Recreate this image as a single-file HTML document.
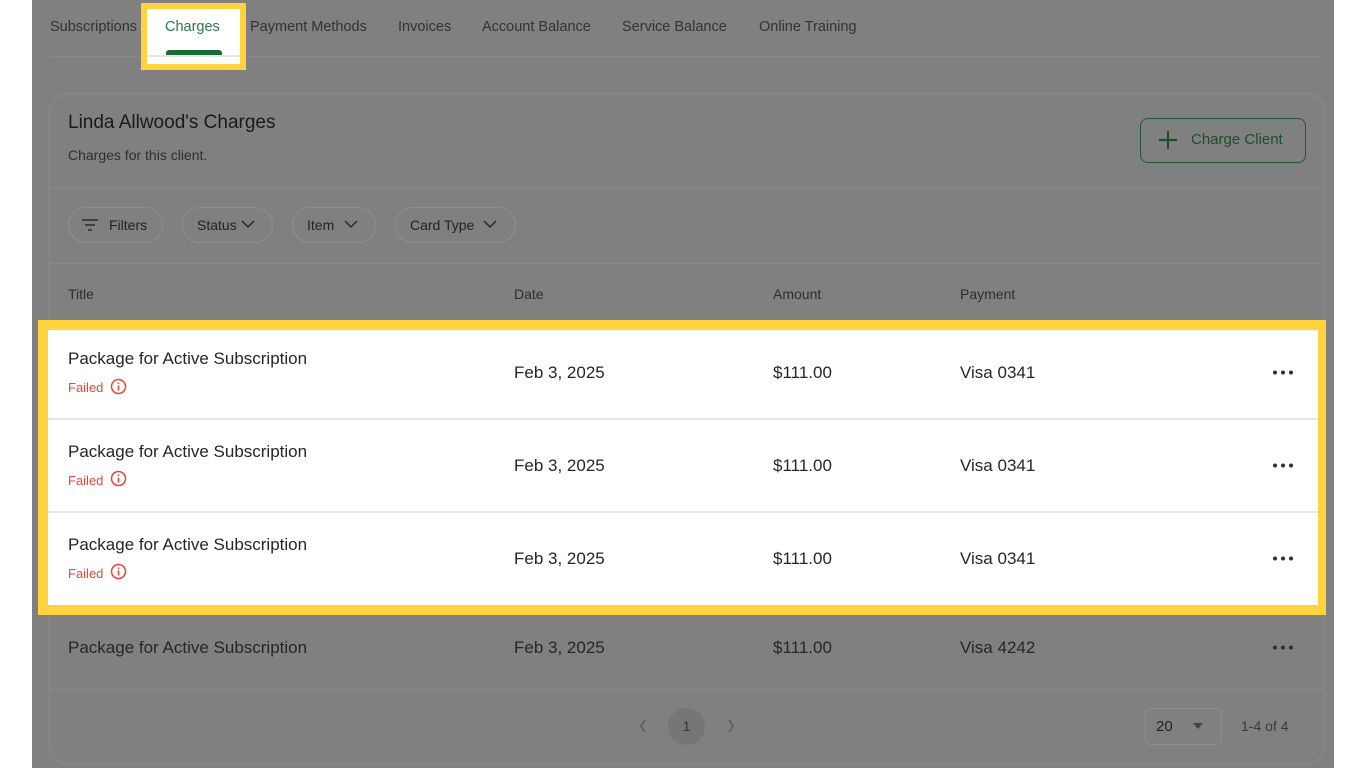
<!DOCTYPE html>
<html><head><meta charset="utf-8"><style>
*{margin:0;padding:0;box-sizing:border-box}
body{width:1366px;height:768px;background:#fff;position:relative;overflow:hidden;font-family:"Liberation Sans",sans-serif;color:#222}
.a{position:absolute;white-space:nowrap}
#bg{left:32px;top:0;width:1302px;height:768px;background:#808080}
.tab{top:19px;font-size:14.5px;color:#333}
.card{left:49px;top:93px;width:1276px;height:672px;border:1px solid #8a8a8a;border-radius:20px}
.hl{background:#8a8a8a;height:1px}
.pill{top:207px;height:36px;border:1px solid #8e8e8e;border-radius:18px;font-size:14px;color:#222;padding:0 14px;line-height:34px}
.th{top:286px;font-size:14px;color:#2e2e2e}
.cell{font-size:17px;color:#262626}
</style></head><body>
<div id="bg" class="a"></div>
<div class="a tab" style="left:50px">Subscriptions</div>
<div class="a hl" style="left:50px;top:56px;width:1274px"></div>
<div class="a" style="left:141px;top:3px;width:105px;height:67px;background:#ffd23f"></div>
<div class="a" style="left:147px;top:9px;width:93px;height:55px;background:#fff"></div>
<div class="a" style="left:147px;top:55px;width:93px;height:2px;background:#e6e6e6"></div>
<div class="a tab" style="left:165px;color:#2c7a45">Charges</div>
<div class="a" style="left:166px;top:50px;width:56px;height:5px;background:#1c6b36;border-radius:3px 3px 0 0"></div>
<div class="a tab" style="left:250px">Payment Methods</div>
<div class="a tab" style="left:398px">Invoices</div>
<div class="a tab" style="left:482px">Account Balance</div>
<div class="a tab" style="left:622px">Service Balance</div>
<div class="a tab" style="left:759px">Online Training</div>

<div class="a card"></div>
<div class="a" style="left:68px;top:112px;font-size:19px;color:#1a1a1a">Linda Allwood's Charges</div>
<div class="a" style="left:68px;top:147px;font-size:14px;color:#2e2e2e">Charges for this client.</div>
<div class="a" style="left:1140px;top:118px;width:166px;height:45px;border:1.5px solid #1f5a33;border-radius:8px;color:#1f4d2c;font-size:15px;line-height:42px;padding-left:50px">Charge Client</div>
<svg class="a" style="left:1157px;top:129px" width="22" height="22"><path d="M11 2v18M2 11h18" stroke="#1f4d2c" stroke-width="2.2"/></svg>
<div class="a hl" style="left:50px;top:188px;width:1274px"></div>

<div class="a pill" style="left:68px;width:95px;padding-left:40px">Filters</div>
<svg class="a" style="left:81px;top:218px" width="18" height="14"><path d="M1 2h16M4 7h10M7 12h4" stroke="#2a2a2a" stroke-width="1.6"/></svg>
<div class="a pill" style="left:182px;width:91px">Status</div>
<div class="a pill" style="left:292px;width:84px">Item</div>
<div class="a pill" style="left:395px;width:121px">Card Type</div>
<svg class="a" style="left:241px;top:219px" width="14" height="10"><path d="M1 2l6 6 6-6" fill="none" stroke="#2a2a2a" stroke-width="1.5"/></svg>
<svg class="a" style="left:344px;top:219px" width="14" height="10"><path d="M1 2l6 6 6-6" fill="none" stroke="#2a2a2a" stroke-width="1.5"/></svg>
<svg class="a" style="left:483px;top:219px" width="14" height="10"><path d="M1 2l6 6 6-6" fill="none" stroke="#2a2a2a" stroke-width="1.5"/></svg>
<div class="a hl" style="left:50px;top:263px;width:1274px"></div>

<div class="a th" style="left:68px">Title</div>
<div class="a th" style="left:514px">Date</div>
<div class="a th" style="left:773px">Amount</div>
<div class="a th" style="left:960px">Payment</div>

<div class="a" style="left:38px;top:320px;width:1288px;height:295px;background:#ffd23f"></div>
<div class="a" style="left:48px;top:330px;width:1270px;height:275px;background:#fff"></div>
<div class="a" style="left:48px;top:418px;width:1270px;height:2px;background:#e6e6e6"></div>
<div class="a" style="left:48px;top:511px;width:1270px;height:2px;background:#e6e6e6"></div>

<svg class="a" style="left:0;top:0" width="1366" height="768">
<g fill="#2e2e2e">
<circle cx="1275" cy="372.5" r="2"/><circle cx="1283" cy="372.5" r="2"/><circle cx="1291" cy="372.5" r="2"/>
<circle cx="1275" cy="465.5" r="2"/><circle cx="1283" cy="465.5" r="2"/><circle cx="1291" cy="465.5" r="2"/>
<circle cx="1275" cy="558.5" r="2"/><circle cx="1283" cy="558.5" r="2"/><circle cx="1291" cy="558.5" r="2"/>
<circle cx="1275" cy="647.5" r="2"/><circle cx="1283" cy="647.5" r="2"/><circle cx="1291" cy="647.5" r="2"/>
</g>
<path d="M645 720l-4 6 4 6M729 720l4 6-4 6" fill="none" stroke="#555" stroke-width="1.3"/>
</svg>

<div class="a cell" style="left:68px;top:349px">Package for Active Subscription</div>
<div class="a" style="left:68px;top:380px;font-size:13px;color:#e8453c">Failed</div>
<svg class="a" style="left:110px;top:378px" width="17" height="17"><circle cx="8.5" cy="8.5" r="7" fill="none" stroke="#e8453c" stroke-width="1.5"/><path d="M8.5 7.5v5M8.5 4.5v1.5" stroke="#e8453c" stroke-width="1.6"/></svg>
<div class="a cell" style="left:514px;top:363px">Feb 3, 2025</div>
<div class="a cell" style="left:773px;top:363px">$111.00</div>
<div class="a cell" style="left:960px;top:363px">Visa 0341</div>

<div class="a cell" style="left:68px;top:442px">Package for Active Subscription</div>
<div class="a" style="left:68px;top:473px;font-size:13px;color:#e8453c">Failed</div>
<svg class="a" style="left:110px;top:470px" width="17" height="17"><circle cx="8.5" cy="8.5" r="7" fill="none" stroke="#e8453c" stroke-width="1.5"/><path d="M8.5 7.5v5M8.5 4.5v1.5" stroke="#e8453c" stroke-width="1.6"/></svg>
<div class="a cell" style="left:514px;top:456px">Feb 3, 2025</div>
<div class="a cell" style="left:773px;top:456px">$111.00</div>
<div class="a cell" style="left:960px;top:456px">Visa 0341</div>

<div class="a cell" style="left:68px;top:535px">Package for Active Subscription</div>
<div class="a" style="left:68px;top:566px;font-size:13px;color:#e8453c">Failed</div>
<svg class="a" style="left:110px;top:563px" width="17" height="17"><circle cx="8.5" cy="8.5" r="7" fill="none" stroke="#e8453c" stroke-width="1.5"/><path d="M8.5 7.5v5M8.5 4.5v1.5" stroke="#e8453c" stroke-width="1.6"/></svg>
<div class="a cell" style="left:514px;top:549px">Feb 3, 2025</div>
<div class="a cell" style="left:773px;top:549px">$111.00</div>
<div class="a cell" style="left:960px;top:549px">Visa 0341</div>

<div class="a cell" style="left:68px;top:638px">Package for Active Subscription</div>
<div class="a cell" style="left:514px;top:638px">Feb 3, 2025</div>
<div class="a cell" style="left:773px;top:638px">$111.00</div>
<div class="a cell" style="left:960px;top:638px">Visa 4242</div>
<div class="a hl" style="left:50px;top:689px;width:1274px"></div>

<div class="a" style="left:668px;top:708px;width:37px;height:37px;border-radius:50%;background:#767676;text-align:center;line-height:37px;font-size:14px;color:#333">1</div>
<div class="a" style="left:1145px;top:708px;width:77px;height:37px;border:1px solid #8e8e8e;border-radius:6px;font-size:15px;color:#222;line-height:35px;padding-left:10px">20</div>
<svg class="a" style="left:1192px;top:722px" width="12" height="8"><path d="M1 1h10L6 7z" fill="#444"/></svg>
<div class="a" style="left:1241px;top:718px;font-size:14px;color:#3a3a3a">1-4 of 4</div>
</body></html>
